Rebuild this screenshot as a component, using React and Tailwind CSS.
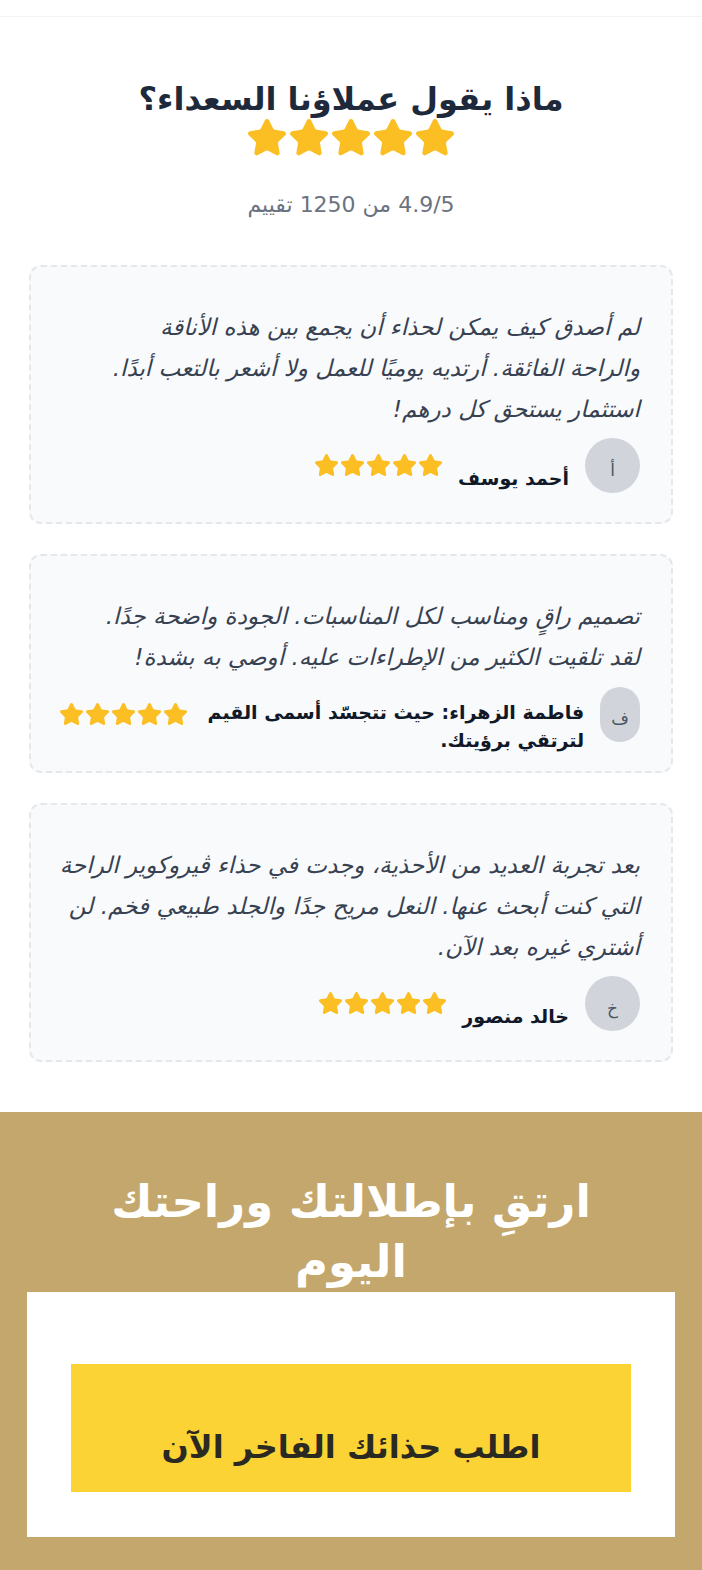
import React from 'react'

const STAR_PATH =
  'M11.525 2.295a.53.53 0 0 1 .95 0l2.31 4.679a2.123 2.123 0 0 0 1.595 1.16l5.166.756a.53.53 0 0 1 .294.904l-3.736 3.638a2.123 2.123 0 0 0-.611 1.878l.882 5.14a.53.53 0 0 1-.771.56l-4.618-2.428a2.122 2.122 0 0 0-1.973 0L6.396 21.01a.53.53 0 0 1-.77-.56l.881-5.139a2.122 2.122 0 0 0-.611-1.879L2.16 9.795a.53.53 0 0 1 .294-.906l5.165-.755a2.122 2.122 0 0 0 1.597-1.16z'

function Star({ className }) {
  return (
    <svg viewBox="1.2 1.2 21.6 21.6" className={className} fill="#fbbf24" stroke="#fbbf24" strokeWidth="1.6" strokeLinejoin="round">
      <path d={STAR_PATH} />
    </svg>
  )
}

function Stars({ size, gap }) {
  return (
    <div className={`flex shrink-0 ${gap}`} dir="ltr">
      {[0, 1, 2, 3, 4].map((i) => <Star key={i} className={size} />)}
    </div>
  )
}

// line breaks follow the original layout
const reviews = [
  {
    id: 1,
    lines: [
      'لم أصدق كيف يمكن لحذاء أن يجمع بين هذه الأناقة',
      'والراحة الفائقة. أرتديه يوميًا للعمل ولا أشعر بالتعب أبدًا.',
      'استثمار يستحق كل درهم!',
    ],
    name: 'أحمد يوسف',
    initial: 'أ',
  },
  {
    id: 2,
    lines: [
      'تصميم راقٍ ومناسب لكل المناسبات. الجودة واضحة جدًا.',
      'لقد تلقيت الكثير من الإطراءات عليه. أوصي به بشدة!',
    ],
    name: 'فاطمة الزهراء: حيث تتجسّد أسمى القيم لترتقي برؤيتك.',
    initial: 'ف',
  },
  {
    id: 3,
    lines: [
      'بعد تجربة العديد من الأحذية، وجدت في حذاء ڤيروكوير الراحة',
      'التي كنت أبحث عنها. النعل مريح جدًا والجلد طبيعي فخم. لن',
      'أشتري غيره بعد الآن.',
    ],
    name: 'خالد منصور',
    initial: 'خ',
  },
]

function ReviewCard({ r }) {
  return (
    <div className="rounded-xl border-2 border-dashed border-gray-200 bg-[#f8fafc] pt-[40px] pb-[29px] pl-[29px] pr-[31px]">
      <p className="text-[23px] leading-[41px] italic text-[#374151] text-right">
        {r.lines.map((l, i) => (
          <span key={i} className="block whitespace-nowrap">{l}</span>
        ))}
      </p>
      <div className="mt-[8px] flex items-center gap-4">
        <div className="h-[55px] w-[55px] rounded-full bg-[#d1d5db] flex items-end justify-center pb-[10px] text-[17px] text-[#4b5563]">
          {r.initial}
        </div>
        <p className="text-[19px] leading-[28px] font-bold text-[#111827] translate-y-[12px]">{r.name}</p>
        <Stars size="w-[23px] h-[23px]" gap="gap-[3px]" />
      </div>
    </div>
  )
}

export default function App() {
  return (
    <div dir="rtl" className="bg-white w-[702px] min-h-[1570px]" style={{ fontFamily: '"DejaVu Sans", "Noto Sans", sans-serif' }}>
      <div className="h-[17px] border-b border-gray-100" />

      <section className="px-[29px] pt-[62px] pb-[50px]">
        <div className="flex flex-col items-center">
          <h2 className="text-[32px] leading-[40px] font-bold text-[#1e293b]">ماذا يقول عملاؤنا السعداء؟</h2>
          <Stars size="w-[38px] h-[38px]" gap="gap-[4px]" />
          <p className="mt-[36px] text-[22px] leading-[24px] text-[#6b7280]">4.9/5 من 1250 تقييم</p>
        </div>

        <div className="mt-[48px] flex flex-col gap-[30px]">
          {reviews.map((r) => <ReviewCard key={r.id} r={r} />)}
        </div>
      </section>

      <section className="bg-[#c4a76c] px-[27px] pt-[60px] pb-[35px]">
        <h2 className="text-center text-white font-bold text-[45px] leading-[60px]">
          <span className="block">ارتقِ بإطلالتك وراحتك</span>
          <span className="block">اليوم</span>
        </h2>
        <div className="relative bg-white pt-[72px] pb-[45px] px-[44px]">
          <button className="w-full h-[128px] bg-[#fbd334] text-[#2a2a22] text-[32px] font-bold pt-[38px]">
            اطلب حذائك الفاخر الآن
          </button>
        </div>
      </section>
    </div>
  )
}
